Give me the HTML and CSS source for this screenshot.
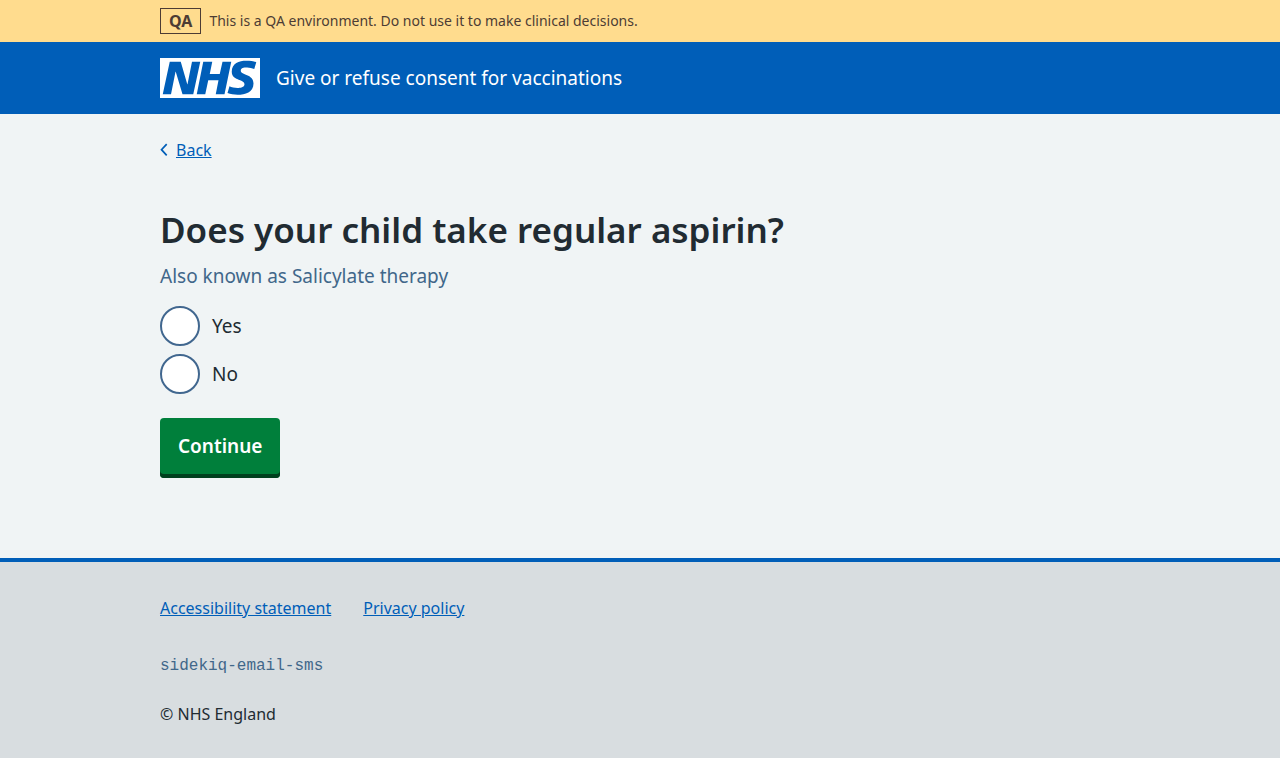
FILE: index.html
```html
<!DOCTYPE html>
<html lang="en">
<head>
<meta charset="utf-8">
<meta name="viewport" content="width=device-width, initial-scale=1">
<title>Does your child take regular aspirin?</title>
<link rel="stylesheet" href="styles.css">
</head>
<body>
<div class="environment">
  <div class="container environment-inner">
    <strong class="environment-tag">QA</strong>
    <span>This is a QA environment. Do not use it to make clinical decisions.</span>
  </div>
</div>
<header class="header">
  <div class="container header-inner">
    <svg class="logo" role="img" aria-label="NHS" viewBox="0 0 200 80" width="100" height="40"><path fill="currentColor" d="M200 0v80H0V0h200Zm-27.5 5.5c-14.5 0-29 5-29 22 0 10.2 7.7 13.5 14.7 16.3l.7.3c5.4 2 10.1 3.9 10.1 8.4 0 6.5-8.5 7.5-14 7.5s-12.5-1.5-16-3.5L135 70c5.5 2 13.5 3.5 20 3.5 15.5 0 32-4.5 32-22.5 0-19.5-25.5-16.5-25.5-25.5 0-5.5 5.5-6.5 12.5-6.5a35 35 0 0 1 14.5 3l4-13.5c-4.5-2-12-3-20-3Zm-131 2h-22l-14 65H22l9-45h.5l13.5 45h21.5l14-65H64l-9 45h-.5l-13-45Zm63 0h-18l-13 65h17l6-28H117l-5.5 28H129l13.5-65H125L119.5 32h-20l5-24.5Z"/></svg>
    <span class="service-name">Give or refuse consent for vaccinations</span>
  </div>
</header>
<div class="container content">
  <a class="back-link" href="#">
    <svg class="back-icon" viewBox="0 0 8 14" width="8" height="14" aria-hidden="true"><path d="M6.7 1.2 1.5 6.7l5.2 5.6" fill="none" stroke="currentColor" stroke-width="1.700"/></svg>
    <span class="back-text">Back</span>
  </a>
  <main class="main">
    <form>
      <fieldset class="fieldset" aria-describedby="hint">
        <legend class="legend"><h1 class="heading">Does your child take regular aspirin?</h1></legend>
        <div class="hint" id="hint">Also known as Salicylate therapy</div>
        <div class="radios">
          <div class="radio-item">
            <input class="radio" type="radio" name="aspirin" id="yes" value="yes">
            <label class="radio-label" for="yes">Yes</label>
          </div>
          <div class="radio-item">
            <input class="radio" type="radio" name="aspirin" id="no" value="no">
            <label class="radio-label" for="no">No</label>
          </div>
        </div>
      </fieldset>
      <button class="button" type="button">Continue</button>
    </form>
  </main>
</div>
<footer class="footer">
  <div class="container footer-inner">
    <ul class="footer-links">
      <li><a href="#">Accessibility statement</a></li>
      <li><a href="#">Privacy policy</a></li>
    </ul>
    <code class="release">sidekiq-email-sms</code>
    <p class="copyright">© NHS England</p>
  </div>
</footer>
</body>
</html>
```
FILE: styles.css
```css
* { box-sizing: border-box; }
html { background: #d8dde0; }
body {
  margin: 0;
  background: #f0f4f5;
  color: #212b32;
  font-family: "Noto Sans", "Open Sans", sans-serif;
  font-size: 19px;
  line-height: 28px;
}
.container { max-width: 960px; margin: 0 auto; }
.environment { background: #ffdc8e; color: #4d3c34; font-size: 14px; line-height: 24px; }
.environment-inner { display: flex; align-items: center; gap: 8px; padding: 8px 0; }
.environment-tag { border: 1px solid; padding: 0 8px; font-size: 16px; font-weight: 700; }
.header { background: #005eb8; color: #fff; }
.header-inner { display: flex; align-items: center; gap: 16px; padding: 16px 0; }
.logo { display: block; flex: none; }
.content { padding: 22px 0 80px; }
.back-link { display: flex; width: fit-content; align-items: center; gap: 8px; color: #005eb8; font-size: 16px; line-height: 28px; text-decoration: none; }
.back-text { text-decoration: underline; }
.main { padding-top: 38px; }
.fieldset { border: 0; margin: 0; padding: 0; }
.legend { padding: 0; }
.heading { margin: 0 0 4px; font-size: 35px; line-height: 56px; font-weight: 600; }
.hint { color: #41678a; }
.radios { display: flex; flex-direction: column; gap: 8px; padding: 16px 0 24px; }
.radio-item { display: flex; align-items: center; gap: 12px; }
.radio {
  appearance: none;
  flex: none;
  width: 40px;
  height: 40px;
  margin: 0;
  border: 2px solid #41678f;
  border-radius: 50%;
  background: #fff;
}
.radio:checked { box-shadow: inset 0 0 0 8px #fff; background: #212b32; }
.button {
  display: block;
  border: 0;
  border-radius: 4px;
  padding: 12px 18px 16px;
  background: #007f3b;
  box-shadow: inset 0 -4px 0 #00401e;
  color: #fff;
  font: inherit;
  font-weight: 600;
  line-height: 32px;
}
.footer { border-top: 4px solid #005eb8; background: #d8dde0; font-size: 16px; line-height: 24px; }
.footer-inner { padding: 34px 0 32px; }
.footer-links { display: flex; gap: 32px; margin: 0 0 34px; padding: 0; list-style: none; }
.footer-links a { color: #005eb8; }
.release { display: block; color: #41678a; font-family: "Liberation Mono", monospace; font-size: 16px; }
.copyright { margin: 24px 0 0; }
```
